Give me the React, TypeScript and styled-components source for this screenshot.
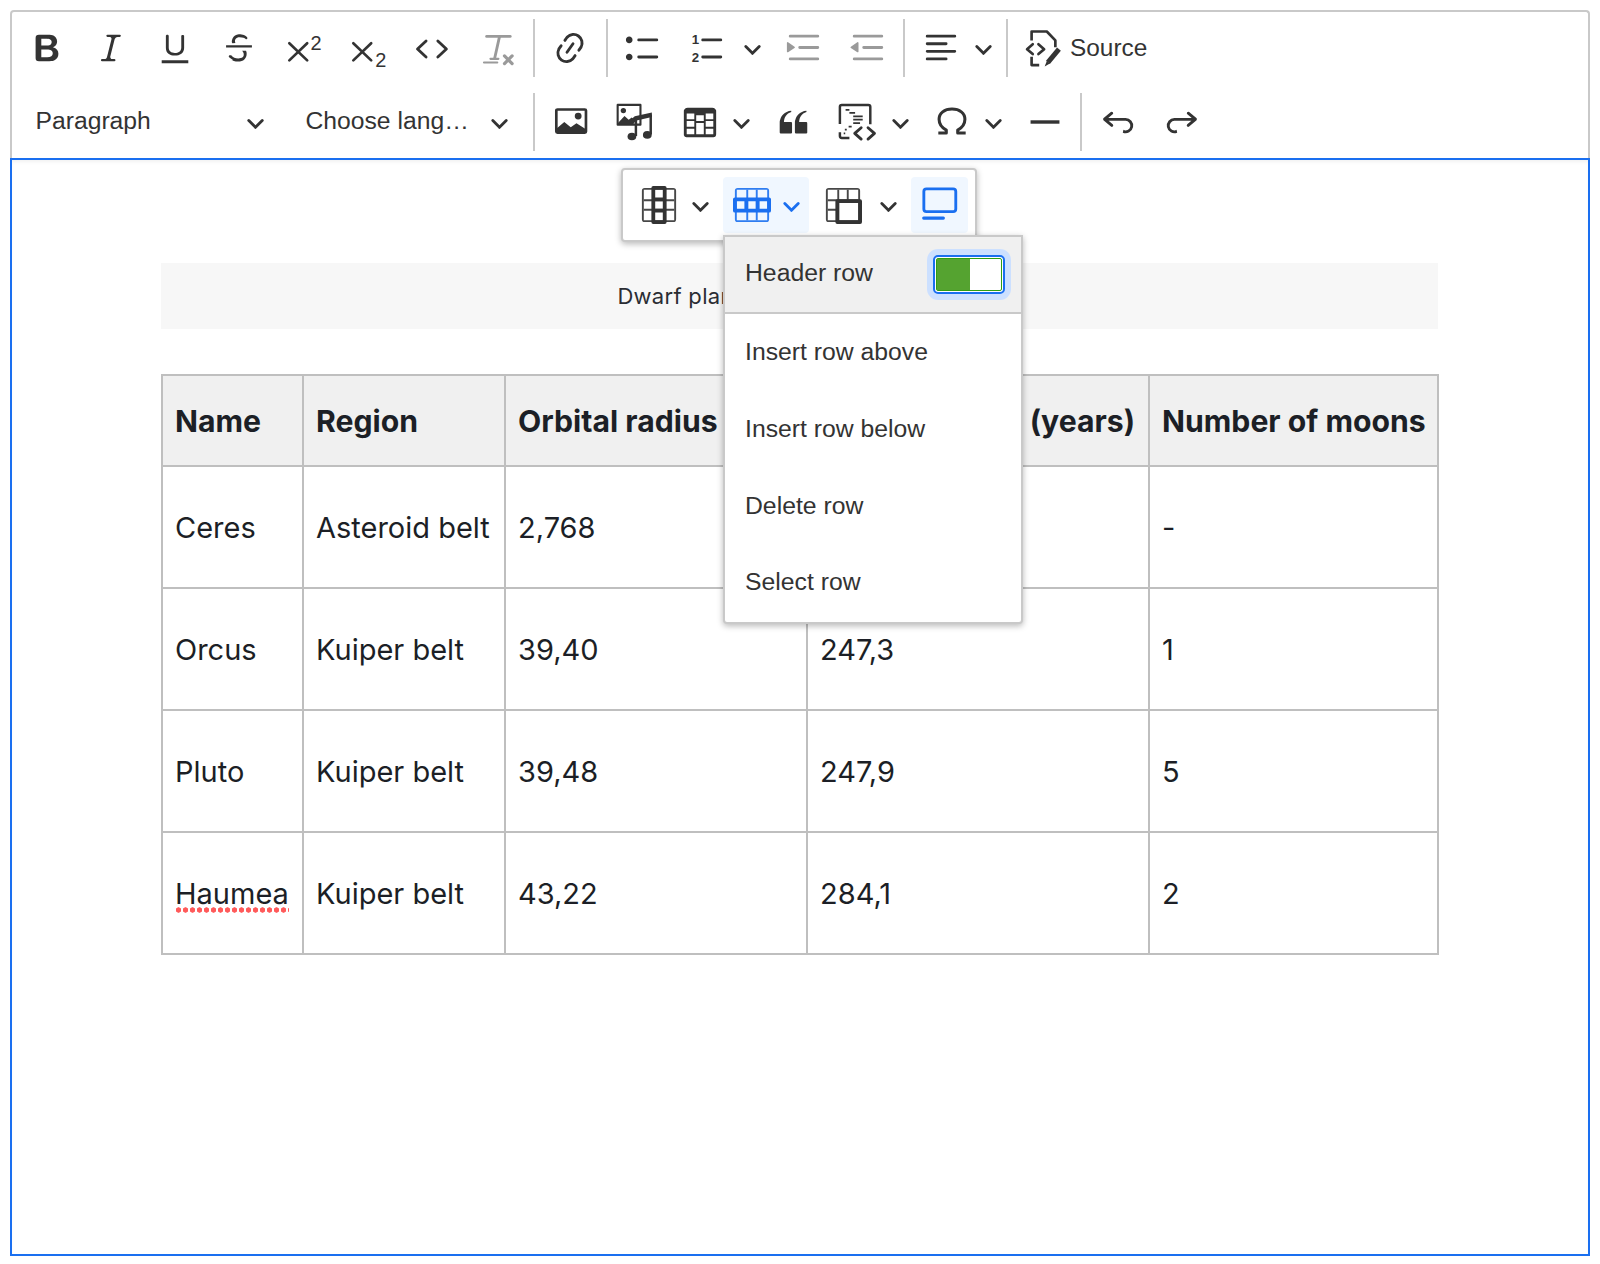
import React from 'react';
import styled, { createGlobalStyle } from 'styled-components';

const GlobalStyle = createGlobalStyle`
  html, body { margin: 0; padding: 0; background: #fff; }
  body { font-family: "Liberation Sans", Arial, sans-serif; color: #333; }
`;

const Editor = styled.div`
  width: 1580px;
  margin: 10px 0 0 10px;
`;

const Toolbar = styled.div`
  box-sizing: border-box;
  height: 148px;
  padding: 0 3px;
  border: 2px solid #c9c9c9;
  border-bottom: none;
  border-radius: 4px 4px 0 0;
  display: flex;
  flex-direction: column;
  gap: 2px;
`;

const Row = styled.div`
  display: flex;
  align-items: center;
  height: 72px;
`;

const ToolButton = styled.div<{ $w?: number; $ml?: number }>`
  flex: none;
  width: ${(p) => p.$w ?? 64}px;
  margin-left: ${(p) => p.$ml ?? 0}px;
  height: 72px;
  display: flex;
  align-items: center;
  justify-content: center;
`;

const Sep = styled.div<{ $ml?: number; $mr?: number }>`
  flex: none;
  width: 2px;
  height: 58px;
  background: #c9c9c9;
  margin-left: ${(p) => p.$ml ?? 4}px;
  margin-right: ${(p) => p.$mr ?? 3}px;
`;

const Icon = styled.svg<{ $color?: string; $size?: number }>`
  flex: none;
  display: block;
  overflow: visible;
  width: ${(p) => p.$size ?? 38}px;
  height: ${(p) => p.$size ?? 38}px;
  color: ${(p) => p.$color ?? '#333'};
  fill: currentColor;
`;

const SourceButton = styled.div`
  display: flex;
  align-items: center;
  gap: 8px;
  margin-left: 16px;
  font-size: 24.4px;
  color: #333;
`;

const Dropdown = styled.div<{ $w: number; $pr: number }>`
  box-sizing: border-box;
  flex: none;
  width: ${(p) => p.$w}px;
  padding: 0 ${(p) => p.$pr}px 0 20.5px;
  display: flex;
  align-items: center;
  justify-content: space-between;
  font-size: 24.7px;
  color: #333;

  span {
    position: relative;
    top: -1px;
  }
`;

const Content = styled.div`
  box-sizing: border-box;
  position: relative;
  height: 1098px;
  padding: 103px 150px 0 149px;
  border: 2px solid #1a6ff0;
  box-shadow: inset 0 3px 4px -2px rgba(0, 0, 0, 0.08);
`;

const Caption = styled.div`
  height: 66px;
  margin-bottom: 45px;
  background: #f7f7f7;
  display: flex;
  align-items: center;
  justify-content: center;
  font-family: Inter, "Liberation Sans", sans-serif;
  font-size: 22px;
  letter-spacing: 0.3px;
  color: #2a2d33;
`;

const Table = styled.table`
  width: 1276px;
  table-layout: fixed;
  border-collapse: collapse;
  font-family: Inter, "Liberation Sans", sans-serif;
  font-size: 29px;
  color: #1c1f26;
`;

const Head = styled.th`
  height: 89px;
  padding: 0 12px;
  text-align: left;
  white-space: nowrap;
  font-size: 30.2px;
  font-weight: 700;
  background: #f0f0f0;
  border: 2px solid #bfbfbf;
`;

const Cell = styled.td`
  height: 117.9px;
  padding: 2px 12px 0;
  white-space: nowrap;
  border: 2px solid #bfbfbf;
`;

const Misspelt = styled.span`
  padding-bottom: 2px;
  background: radial-gradient(circle at center, #ff5a5a 2.4px, transparent 2.9px) repeat-x left bottom / 7px 6px;
`;

const Balloon = styled.div`
  box-sizing: border-box;
  position: absolute;
  left: 609px;
  top: 8px;
  width: 356px;
  height: 74px;
  padding: 7px 0 0 6px;
  display: flex;
  gap: 8px;
  background: #fff;
  border: 2px solid #c9c9c9;
  border-radius: 4px;
  box-shadow: 0 2px 6px rgba(0, 0, 0, 0.28);
`;

const BalloonGroup = styled.div<{ $active?: boolean; $w?: number; $pl?: number; $gap?: number }>`
  box-sizing: border-box;
  width: ${(p) => p.$w ?? 86}px;
  height: 56px;
  padding-left: ${(p) => p.$pl ?? 10}px;
  display: flex;
  align-items: center;
  gap: ${(p) => p.$gap ?? 14}px;
  border-radius: 4px;
  background: ${(p) => (p.$active ? '#f0f7ff' : 'transparent')};
`;

const Menu = styled.div`
  box-sizing: border-box;
  position: absolute;
  left: 711px;
  top: 74.5px;
  width: 300px;
  height: 389px;
  background: #fff;
  border: 2px solid #c9c9c9;
  border-radius: 0 0 4px 4px;
  box-shadow: 0 2px 6px rgba(0, 0, 0, 0.28);
  font-size: 24.75px;
  color: #333;
`;

const MenuHeader = styled.div`
  box-sizing: content-box;
  height: 75.5px;
  padding: 0 16px 0 20px;
  display: flex;
  align-items: center;
  justify-content: space-between;
  background: #f0f0f0;
  border-bottom: 2px solid #c9c9c9;

  span {
    position: relative;
    top: -1px;
  }
`;

const MenuItem = styled.div`
  height: 76.7px;
  padding-left: 20px;
  display: flex;
  align-items: center;
`;

const ToggleRing = styled.div`
  box-sizing: border-box;
  width: 72px;
  height: 39px;
  padding: 1px;
  background: #fff;
  border: 2px solid #1a6ff0;
  border-radius: 5px;
  box-shadow: 0 0 0 6px #cce0ff;
`;

const ToggleTrack = styled.div`
  box-sizing: border-box;
  height: 100%;
  display: flex;
  background: #fff;
  border: 1.5px solid #2f9e12;
  border-radius: 2px;
`;

const ToggleFill = styled.div`
  width: 33px;
  background: #55a330;
`;

const Chevron = ({ color }: { color?: string }) => (
  <Icon viewBox="0 0 10 10" $size={19} $color={color}>
    <path d="M.941 4.523a.75.75 0 1 1 1.06-1.06l3.006 3.005 3.005-3.005a.75.75 0 1 1 1.06 1.06l-3.549 3.55a.75.75 0 0 1-1.168-.136L.941 4.523z" />
  </Icon>
);

const Svg = ({ children, color }: { children: React.ReactNode; color?: string }) => (
  <Icon viewBox="0 0 20 20" $color={color}>
    {children}
  </Icon>
);

const stroke = { fill: 'none', stroke: 'currentColor', strokeLinecap: 'round', strokeLinejoin: 'round' } as const;
const digit = { fontFamily: '"Liberation Sans", sans-serif', fontWeight: 400 };

const BLUE = '#1a6ff0';
const GREY = '#9a9a9a';

const paths = {
  bold: 'M10.187 17H5.773c-.637 0-1.092-.138-1.364-.415-.273-.277-.409-.718-.409-1.323V4.738c0-.617.14-1.06.419-1.332.279-.27.73-.406 1.354-.406h4.68c.69 0 1.288.041 1.793.124.506.083.96.242 1.36.478.341.197.644.447.906.75a3.262 3.262 0 0 1 .808 2.162c0 1.401-.722 2.426-2.167 3.075C15.05 10.175 16 11.315 16 13.01a3.756 3.756 0 0 1-2.296 3.504 6.1 6.1 0 0 1-1.517.377c-.571.073-1.238.11-2 .11zm-.217-6.217H7v4.087h3.069c1.977 0 2.965-.69 2.965-2.072 0-.707-.256-1.22-.768-1.537-.512-.319-1.277-.478-2.296-.478zM7 5.13v3.619h2.606c.729 0 1.292-.067 1.69-.2a1.6 1.6 0 0 0 .91-.765c.165-.267.247-.566.247-.897 0-.707-.26-1.176-.778-1.409-.519-.232-1.31-.348-2.375-.348H7z',
  italic: 'm9.586 14.633.021.004c-.036.335.095.655.393.962.082.083.173.15.274.201h1.474a.6.6 0 1 1 0 1.2H5.304a.6.6 0 0 1 0-1.2h1.15c.474-.07.809-.182 1.005-.334.157-.122.291-.32.404-.597l2.416-9.55a1.053 1.053 0 0 0-.281-.823 1.12 1.12 0 0 0-.442-.296H8.15a.6.6 0 0 1 0-1.2h6.443a.6.6 0 1 1 0 1.2h-1.195c-.376.056-.65.155-.823.296-.215.175-.423.439-.623.79l-2.366 9.347z',
  underline: 'M3 18v-1.5h14V18zm2.2-8V3.6c0-.4.4-.6.8-.6.3 0 .7.2.7.6v6.2c0 2 1.3 2.8 3.2 2.8 1.9 0 3.4-.9 3.4-2.9V3.6c0-.3.4-.5.8-.5.3 0 .7.2.7.5V10c0 2.7-2.2 4-4.9 4-2.6 0-4.7-1.2-4.7-4z',
  strike: 'M7 16.4c-.8-.4-1.5-.9-2.2-1.5a.6.6 0 0 1-.2-.5l.3-.6h1c1 1.2 2.1 1.7 3.7 1.7 1 0 1.8-.3 2.3-.6.6-.4.6-1.2.6-1.3.2-1.2-.9-2.1-.9-2.1h2.1c.3.7.4 1.2.3 2.1 0 .7-.4 1.7-1.2 2.4-.8.7-1.8 1.1-3.4 1.1-1.5 0-2.9-.5-3.4-.7zM3.2 9.8V8.6h13.6v1.2zm3.3-2.3c0-.3-.3-.4-.3-.7 0-.6.1-1.1.4-1.8a3.9 3.9 0 0 1 3.3-2.3c1 0 2 .1 2.7.4.7.3 1.3.7 1.7 1.2l.1.4a.6.6 0 0 1-.9.6c-.6-.5-1.4-.9-3.2-.9-1 0-1.6.3-2.1.8a2 2 0 0 0-.3 1.5l.2.7z',
  link: 'm11.077 15 .991-1.416a.75.75 0 1 1 1.229.86l-1.148 1.64a.748.748 0 0 1-.217.206 5.251 5.251 0 0 1-8.503-5.955.741.741 0 0 1 .12-.274l1.147-1.639a.75.75 0 1 1 1.228.86L4.933 10.7l.006.003a3.75 3.75 0 0 0 6.132 4.294l.006.004zm5.494-5.335a.748.748 0 0 1-.12.274l-1.147 1.639a.75.75 0 1 1-1.228-.86l.86-1.23a3.75 3.75 0 0 0-6.144-4.301l-.86 1.229a.75.75 0 0 1-1.229-.86l1.148-1.64a.748.748 0 0 1 .217-.206 5.251 5.251 0 0 1 8.503 5.955zm-4.563-2.532a.75.75 0 0 1 .184 1.045l-3.155 4.505a.75.75 0 1 1-1.229-.86l3.155-4.506a.75.75 0 0 1 1.045-.184z',
  bullets: 'M7 5.75c0 .414.336.75.75.75h9.5a.75.75 0 1 0 0-1.5h-9.5a.75.75 0 0 0-.75.75zm-6 0C1 4.784 1.777 4 2.75 4c.966 0 1.75.777 1.75 1.75 0 .966-.777 1.75-1.75 1.75C1.784 7.5 1 6.723 1 5.75zm6 9c0 .414.336.75.75.75h9.5a.75.75 0 1 0 0-1.5h-9.5a.75.75 0 0 0-.75.75zm-6 0c0-.966.777-1.75 1.75-1.75.966 0 1.75.777 1.75 1.75 0 .966-.777 1.75-1.75 1.75-.966 0-1.75-.777-1.75-1.75z',
  numberLines: 'M7 5.75c0 .414.336.75.75.75h9.5a.75.75 0 1 0 0-1.5h-9.5a.75.75 0 0 0-.75.75zm0 9c0 .414.336.75.75.75h9.5a.75.75 0 1 0 0-1.5h-9.5a.75.75 0 0 0-.75.75z',
  indent: 'M2 3.75c0 .414.336.75.75.75h14.5a.75.75 0 1 0 0-1.5H2.75a.75.75 0 0 0-.75.75zm5 6c0 .414.336.75.75.75h9.5a.75.75 0 1 0 0-1.5h-9.5a.75.75 0 0 0-.75.75zM2.75 16.5h14.5a.75.75 0 1 0 0-1.5H2.75a.75.75 0 1 0 0 1.5zM1.632 6.95 5.02 9.358a.4.4 0 0 1-.013.661l-3.39 2.207A.4.4 0 0 1 1 11.892V7.275a.4.4 0 0 1 .632-.326z',
  outdent: 'M2 3.75c0 .414.336.75.75.75h14.5a.75.75 0 1 0 0-1.5H2.75a.75.75 0 0 0-.75.75zm5 6c0 .414.336.75.75.75h9.5a.75.75 0 1 0 0-1.5h-9.5a.75.75 0 0 0-.75.75zM2.75 16.5h14.5a.75.75 0 1 0 0-1.5H2.75a.75.75 0 1 0 0 1.5zm1.618-9.55L.98 9.358a.4.4 0 0 0 .013.661l3.39 2.207A.4.4 0 0 0 5 11.892V7.275a.4.4 0 0 0-.632-.326z',
  align: 'M2 3.75c0 .414.336.75.75.75h14.5a.75.75 0 1 0 0-1.5H2.75a.75.75 0 0 0-.75.75zm0 8c0 .414.336.75.75.75h14.5a.75.75 0 1 0 0-1.5H2.75a.75.75 0 0 0-.75.75zm0 4c0 .414.336.75.75.75h9.929a.75.75 0 1 0 0-1.5H2.75a.75.75 0 0 0-.75.75zm0-8c0 .414.336.75.75.75h9.929a.75.75 0 1 0 0-1.5H2.75a.75.75 0 0 0-.75.75z',
  table: 'M3 5.5v3h4v-3H3zm0 4v3h4v-3H3zm0 4v3h4v-3H3zm5 3h4v-3H8v3zm5 0h4v-3h-4v3zm4-4v-3h-4v3h4zm0-4v-3h-4v3h4zm1.5 8a1.5 1.5 0 0 1-1.5 1.5H3A1.5 1.5 0 0 1 1.5 17V4c.222-.863 1.068-1.5 2-1.5h13c.932 0 1.778.637 2 1.5v13zM12 13.5H8v-3h4v3zm0-4H8v-3h4v3z',
  quote: 'M3 10.423a6.5 6.5 0 0 1 6.056-6.408l.038.67C6.448 5.423 5.354 7.663 5.22 10H9c.552 0 .5.432.5.986v4.511c0 .554-.448.503-1 .503h-5c-.552 0-.5-.449-.5-1.003v-4.574zm8 0a6.5 6.5 0 0 1 6.056-6.408l.038.67c-2.646.739-3.74 2.979-3.873 5.315H17c.552 0 .5.432.5.986v4.511c0 .554-.448.503-1 .503h-5c-.552 0-.5-.449-.5-1.003v-4.574z',
  undo: 'm5.042 9.367 2.189 1.837a.75.75 0 0 1-.965 1.149l-3.788-3.18a.747.747 0 0 1-.21-.284.75.75 0 0 1 .17-.945L6.23 4.762a.75.75 0 1 1 .964 1.15L4.863 7.866h8.917A.75.75 0 0 1 14 7.9a4 4 0 1 1-1.477 7.718l.344-1.489a2.5 2.5 0 1 0 1.094-4.73l.008-.032H5.042z',
  redo: 'm14.958 9.367-2.189 1.837a.75.75 0 0 0 .965 1.149l3.788-3.18a.747.747 0 0 0 .21-.284.75.75 0 0 0-.17-.945L13.77 4.762a.75.75 0 1 0-.964 1.15l2.331 1.955H6.22A.75.75 0 0 0 6 7.9a4 4 0 1 0 1.477 7.718l-.344-1.489A2.5 2.5 0 1 1 6.039 9.4l-.008-.032h8.927z',
  frame: 'M2.5 1h15A1.5 1.5 0 0 1 19 2.5v15a1.5 1.5 0 0 1-1.5 1.5h-15A1.5 1.5 0 0 1 1 17.5v-15A1.5 1.5 0 0 1 2.5 1zM2 2v16h16V2H2z',
};

const Plain = ({ d, color }: { d: string; color?: string }) => (
  <Svg color={color}>
    <path d={d} />
  </Svg>
);

const Cross = () => (
  <path d="M2.8 7.5 12.2 16.5M12.2 7.5 2.8 16.5" {...stroke} strokeWidth={1.4} />
);

const Superscript = () => (
  <Svg>
    <Cross />
    <text x="14" y="10.8" fontSize="10.5" style={digit}>2</text>
  </Svg>
);

const Subscript = () => (
  <Svg>
    <Cross />
    <text x="14.4" y="20" fontSize="10.5" style={digit}>2</text>
  </Svg>
);

const CodeIcon = () => (
  <Svg>
    <path d="M7.4 6.3 2.9 10.5l4.5 4.2M13.6 6.3l4.5 4.2-4.5 4.2" {...stroke} strokeWidth={1.5} />
  </Svg>
);

const RemoveFormat = () => (
  <Svg color={GREY}>
    <path d="M5.6 3.9H18" {...stroke} strokeWidth={1.5} />
    <path d="M12.4 3.9 9.8 15.5" {...stroke} strokeWidth={1.5} />
    <path d="M7.6 15.7h4.2M4.2 17.6h7" {...stroke} strokeWidth={1.1} />
    <path d="M15 14.2l4 4M19 14.2l-4 4" {...stroke} strokeWidth={1.7} />
  </Svg>
);

const NumberedList = () => (
  <Svg>
    <path d={paths.numberLines} />
    <text x="2" y="7.8" fontSize="7" style={{ ...digit, fontWeight: 700 }}>1</text>
    <text x="2" y="17.2" fontSize="7" style={{ ...digit, fontWeight: 700 }}>2</text>
  </Svg>
);

const TableIcon = () => (
  <Svg>
    <path d={paths.table} fillRule="evenodd" />
  </Svg>
);

const SourceIcon = () => (
  <Svg>
    <path d="M4 6V1.3h8l4.5 4.7v3.6M4 14.6V19h4" {...stroke} strokeWidth={1.4} strokeLinecap="butt" />
    <path d="M4.6 8 1.6 10.6l3 2.6M7.6 8l3 2.6-3 2.6" {...stroke} strokeWidth={1.4} />
    <path d="M18.4 10.6l-5.8 7" {...stroke} strokeWidth={2.6} strokeLinecap="butt" />
    <path d="M12 16.8l1.6 1.3-2.7 1.7z" />
  </Svg>
);

const ImageIcon = () => (
  <Svg>
    <rect x="2.8" y="3.4" width="15.6" height="12.2" rx="0.6" {...stroke} strokeWidth={1.4} />
    <circle cx="14.3" cy="6.9" r="1.8" />
    <path d="M2.8 13.6 7 10l3.4 2.8 3-2.2 5 3.2v2H2.8z" />
  </Svg>
);

const MediaIcon = () => (
  <Svg>
    <rect x="1.4" y="1" width="12" height="10.4" {...stroke} strokeWidth={1.1} strokeLinecap="butt" />
    <circle cx="4.4" cy="4" r="1.4" />
    <path d="M1.6 10.5 5 6.8l2.2 2 1.6-1.2 1.6 1.2-1 2.6H1.6z" />
    <path d="M8.6 8.6 10.4 7l9-2v2.4l-8 1.8v-.4L9.6 11z" />
    <path d="M11 8v9.4M18.8 6v10.6" {...stroke} strokeWidth={1.3} strokeLinecap="butt" />
    <ellipse cx="8.9" cy="17.6" rx="2.3" ry="2" />
    <ellipse cx="17" cy="16.8" rx="2.3" ry="2" />
  </Svg>
);

const SnippetIcon = () => (
  <Svg>
    <path d="M1 11V2a1 1 0 0 1 1-1h14a1 1 0 0 1 1 1v9.2M1 15.4V17.4a1 1 0 0 0 1 1h4" {...stroke} strokeWidth={1.3} strokeLinecap="butt" />
    <path d="M4 3.6h2M6 5.2h3M8 7h5M8 8.8h5M8 10.6h3.6M5.6 12.4h1.6M3.6 14h1M3 16h.8" {...stroke} strokeWidth={0.9} strokeLinecap="butt" />
    <path d="M12.2 13 8.8 16l3.4 3M15.8 13l3.4 3-3.4 3" {...stroke} strokeWidth={1.5} />
  </Svg>
);

const OmegaIcon = () => (
  <Svg>
    <path d="M2.8 15.8H7v-1.5C4.6 13 3.2 11.1 3.2 8.6 3.2 5.3 6 3.2 10 3.2s6.8 2.1 6.8 5.4c0 2.5-1.4 4.4-3.8 5.7v1.5h4.2" {...stroke} strokeWidth={1.6} strokeLinecap="butt" />
  </Svg>
);

const RuleIcon = () => (
  <Svg>
    <path d="M2.4 10h15.2" {...stroke} strokeWidth={1.8} strokeLinecap="butt" />
  </Svg>
);

const ColumnIcon = () => (
  <Svg>
    <path d={paths.frame} opacity=".9" />
    <path d="M18 7v1H2V7h16zm0 5v1H2v-1h16z" opacity=".9" />
    <path d="M14 1v18a1 1 0 0 1-1 1H7a1 1 0 0 1-1-1V1a1 1 0 0 1 1-1h6a1 1 0 0 1 1 1zm-2 1H8v4h4V2zm0 6H8v4h4V8zm0 6H8v4h4v-4z" />
  </Svg>
);

const RowIcon = () => (
  <Svg color={BLUE}>
    <path d={paths.frame} opacity=".9" />
    <path d="M7 2h1v16H7V2zm5 0h1v16h-1V2z" opacity=".9" />
    <path d="M1 6h18a1 1 0 0 1 1 1v6a1 1 0 0 1-1 1H1a1 1 0 0 1-1-1V7a1 1 0 0 1 1-1zm1 2v4h4V8H2zm6 0v4h4V8H8zm6 0v4h4V8h-4z" />
  </Svg>
);

const MergeIcon = () => (
  <Svg>
    <path d={paths.frame} opacity=".9" />
    <path d="M7 2h1v16H7V2zm5 0h1v7h-1V2zm6 5v1H2V7h16zM8 12v1H2v-1h6z" opacity=".9" />
    <path d="M7 7h12a1 1 0 0 1 1 1v11a1 1 0 0 1-1 1H7a1 1 0 0 1-1-1V8a1 1 0 0 1 1-1zm1 2v9h10V9H8z" />
  </Svg>
);

const LayoutIcon = () => (
  <Svg color={BLUE}>
    <rect x="1.5" y="1.5" width="16.8" height="12" rx="1.4" {...stroke} strokeWidth={1.5} />
    <path d="M1.4 16.9h10.4" {...stroke} strokeWidth={1.6} />
  </Svg>
);

const columns = [141, 202, 302, 342, 289];
const headers = ['Name', 'Region', 'Orbital radius (AU)', 'Orbital period (years)', 'Number of moons'];
const planets = [
  ['Ceres', 'Asteroid belt', '2,768', '4,60', '-'],
  ['Orcus', 'Kuiper belt', '39,40', '247,3', '1'],
  ['Pluto', 'Kuiper belt', '39,48', '247,9', '5'],
  ['Haumea', 'Kuiper belt', '43,22', '284,1', '2'],
];
const rowActions = ['Insert row above', 'Insert row below', 'Delete row', 'Select row'];

export default function App() {
  return (
    <>
      <GlobalStyle />
      <Editor>
        <Toolbar>
          <Row>
            <ToolButton><Plain d={paths.bold} /></ToolButton>
            <ToolButton><Plain d={paths.italic} /></ToolButton>
            <ToolButton><Plain d={paths.underline} /></ToolButton>
            <ToolButton><Plain d={paths.strike} /></ToolButton>
            <ToolButton><Superscript /></ToolButton>
            <ToolButton><Subscript /></ToolButton>
            <ToolButton><CodeIcon /></ToolButton>
            <ToolButton><RemoveFormat /></ToolButton>
            <Sep $ml={6} />
            <ToolButton><Plain d={paths.link} /></ToolButton>
            <Sep />
            <ToolButton><Plain d={paths.bullets} /></ToolButton>
            <ToolButton><NumberedList /></ToolButton>
            <ToolButton $w={26}><Chevron /></ToolButton>
            <ToolButton $ml={7}><Plain d={paths.indent} color={GREY} /></ToolButton>
            <ToolButton><Plain d={paths.outdent} color={GREY} /></ToolButton>
            <Sep $ml={3} $mr={4} />
            <ToolButton><Plain d={paths.align} /></ToolButton>
            <ToolButton $w={20}><Chevron /></ToolButton>
            <Sep $ml={13} $mr={0} />
            <SourceButton>
              <SourceIcon />
              Source
            </SourceButton>
          </Row>
          <Row>
            <Dropdown $w={270} $pr={20}>
              <span>Paragraph</span>
              <Chevron />
            </Dropdown>
            <Dropdown $w={236} $pr={12}>
              <span>Choose lang…</span>
              <Chevron />
            </Dropdown>
            <Sep $ml={12} />
            <ToolButton><ImageIcon /></ToolButton>
            <ToolButton><MediaIcon /></ToolButton>
            <ToolButton $ml={2}><TableIcon /></ToolButton>
            <ToolButton $w={18}><Chevron /></ToolButton>
            <ToolButton $ml={11}><Plain d={paths.quote} /></ToolButton>
            <ToolButton><SnippetIcon /></ToolButton>
            <ToolButton $w={22}><Chevron /></ToolButton>
            <ToolButton $ml={9}><OmegaIcon /></ToolButton>
            <ToolButton $w={18}><Chevron /></ToolButton>
            <ToolButton $ml={11}><RuleIcon /></ToolButton>
            <Sep $ml={3} $mr={4} />
            <ToolButton><Plain d={paths.undo} /></ToolButton>
            <ToolButton><Plain d={paths.redo} /></ToolButton>
          </Row>
        </Toolbar>
        <Content>
          <Caption>Dwarf planets of the Solar System</Caption>
          <Table>
            <colgroup>
              {columns.map((w) => (
                <col key={w} width={w} />
              ))}
            </colgroup>
            <thead>
              <tr>
                {headers.map((h) => (
                  <Head key={h}>{h}</Head>
                ))}
              </tr>
            </thead>
            <tbody>
              {planets.map((planet) => (
                <tr key={planet[0]}>
                  {planet.map((value, i) => (
                    <Cell key={i}>{value === 'Haumea' ? <Misspelt>{value}</Misspelt> : value}</Cell>
                  ))}
                </tr>
              ))}
            </tbody>
          </Table>
          <Balloon>
            <BalloonGroup $pl={11} $gap={13}>
              <ColumnIcon />
              <Chevron />
            </BalloonGroup>
            <BalloonGroup $active $gap={11}>
              <RowIcon />
              <Chevron color={BLUE} />
            </BalloonGroup>
            <BalloonGroup $pl={7} $gap={17}>
              <MergeIcon />
              <Chevron />
            </BalloonGroup>
            <BalloonGroup $active $w={57}>
              <LayoutIcon />
            </BalloonGroup>
          </Balloon>
          <Menu>
            <MenuHeader>
              <span>Header row</span>
              <ToggleRing>
                <ToggleTrack>
                  <ToggleFill />
                </ToggleTrack>
              </ToggleRing>
            </MenuHeader>
            {rowActions.map((action) => (
              <MenuItem key={action}>{action}</MenuItem>
            ))}
          </Menu>
        </Content>
      </Editor>
    </>
  );
}
